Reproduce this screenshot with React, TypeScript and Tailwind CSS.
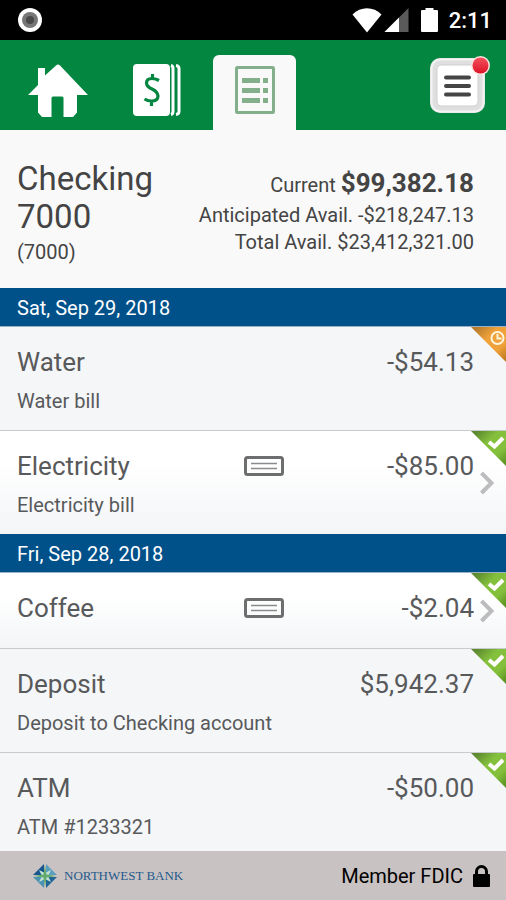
import React from 'react';
import clsx from 'clsx';

interface Transaction {
  id: number;
  name: string;
  amount: string;
  description?: string;
  status: 'pending' | 'cleared';
  hasCheck?: boolean;
}

interface Day {
  label: string;
  transactions: Transaction[];
}

const days: Day[] = [
  {
    label: 'Sat, Sep 29, 2018',
    transactions: [
      { id: 1, name: 'Water', amount: '-$54.13', description: 'Water bill', status: 'pending' },
      {
        id: 2,
        name: 'Electricity',
        amount: '-$85.00',
        description: 'Electricity bill',
        status: 'cleared',
        hasCheck: true,
      },
    ],
  },
  {
    label: 'Fri, Sep 28, 2018',
    transactions: [
      { id: 3, name: 'Coffee', amount: '-$2.04', status: 'cleared', hasCheck: true },
      {
        id: 4,
        name: 'Deposit',
        amount: '$5,942.37',
        description: 'Deposit to Checking account',
        status: 'cleared',
      },
      { id: 5, name: 'ATM', amount: '-$50.00', description: 'ATM #1233321', status: 'cleared' },
    ],
  },
];

const StatusBar = () => (
  <div className="flex h-10 shrink-0 items-center justify-between bg-black pr-[14px] pl-[17px] text-white">
    <svg className="size-[26px]" viewBox="0 0 26 26">
      <circle cx="13" cy="13" r="12" fill="#fff" />
      <circle cx="13" cy="13" r="8" fill="#777" />
      <circle cx="13" cy="13" r="4" fill="#4a4a4a" />
    </svg>
    <div className="flex items-center">
      <svg className="h-[26px] w-[30px]" viewBox="0 0 30 26">
        <path d="M15 25.500L.5 7.500C8.500-.8 21.500-.8 29.500 7.500z" fill="#fff" />
      </svg>
      <svg className="ml-[2px] h-[26px] w-[25px]" viewBox="0 0 25 26">
        <path d="M24.500 1v24H.5z" fill="#5a5a5a" />
        <path d="M15 10.500V25H.5z" fill="#fff" />
      </svg>
      <svg className="ml-3 h-[26px] w-[17px]" viewBox="0 0 17 26">
        <path d="M4.500 1h8v2H16q1 0 1 1v20q0 1-1 1H1q-1 0-1-1V4q0-1 1-1h3.500z" fill="#fff" />
      </svg>
      <span className="ml-[11px] pt-[2px] text-[22px] leading-6 font-medium">2:11</span>
    </div>
  </div>
);

const NavBar = () => (
  <nav className="flex h-[90px] shrink-0 items-end bg-[#038640] pr-[16px] pl-[17px]">
    <button aria-label="Home" className="flex h-[75px] w-[82px] items-center justify-center pb-1">
      <svg className="h-[54px] w-[60px]" viewBox="0 0 60 54">
        <path
          d="M10 4h7v7.500L28 1.500q2-2 4 0L60 31H49v17.500l-4 4.500H35.500V34q0-1.500-1.500-1.500H25q-1.500 0-1.500 1.500v19H14l-4-4.500V31H0l10-10z"
          fill="#fff"
        />
      </svg>
    </button>
    <button aria-label="Accounts" className="ml-[17px] flex h-[75px] w-[82px] items-center justify-center pb-[6px]">
      <svg className="h-[52px] w-[48px]" viewBox="0 0 48 52">
        <rect width="37" height="52" rx="4" fill="#fff" />
        <path d="M38 1.500q2 .5 2 3v43q0 2.500-2 3M43 1.500q3 .5 3 3v43q0 2.500-3 3" fill="none" stroke="#fff" strokeWidth="3" />
        <path d="M26 16.500q-3.500-2-7-2-5.500 0-5.500 4.500 0 3.500 5.500 6t6 7q0 5-6.500 5-4 0-7-2M19.500 10v5M18.500 37v5" fill="none" stroke="#038640" strokeWidth="3.200" />
      </svg>
    </button>
    <button
      aria-label="Transactions"
      className="ml-[15px] flex h-[75px] w-[83px] items-center justify-center rounded-t-md bg-[#f9f9f9] pb-[6px]"
    >
      <svg className="h-[48px] w-[40px]" viewBox="0 0 40 48" fill="none">
        <rect x="1.500" y="1.500" width="37" height="45" rx="1" stroke="#83b08a" strokeWidth="3" />
        <g stroke="#83b08a" strokeWidth="5">
          <path d="M7 14.500h18M28 14.500h5M7 24.500h18M28 24.500h5M7 34.500h18M28 34.500h5" />
        </g>
      </svg>
    </button>
    <button aria-label="Menu" className="mb-4 ml-auto">
      <svg className="h-[58px] w-[60px]" viewBox="0 0 60 58">
        <defs>
          <linearGradient id="badge" x1="0" y1="0" x2="0" y2="1">
            <stop offset="0" stopColor="#f5505c" />
            <stop offset="1" stopColor="#dc1428" />
          </linearGradient>
        </defs>
        <rect x="0" y="2" width="55" height="55" rx="10" fill="#dfdfdf" />
        <rect x="1.500" y="3.500" width="52" height="52" rx="9" fill="none" stroke="#f3f3f3" strokeWidth="2" />
        <rect x="7" y="9" width="41" height="41" rx="4" fill="#fff" stroke="#cfcfcf" />
        <path d="M16 21.500h23M16 30h23M16 38.500h23" stroke="#454545" strokeWidth="4" strokeLinecap="round" />
        <circle cx="50.500" cy="9.500" r="9.500" fill="#fbe3df" />
        <circle cx="50.500" cy="9.500" r="8" fill="url(#badge)" />
      </svg>
    </button>
  </nav>
);

const AccountSummary = () => (
  <header className="flex h-[158px] shrink-0 items-start justify-between bg-[#f9f9f9] pr-8 pl-[17px] text-[#444]">
    <div className="pt-[30px]">
      <h1 className="w-[150px] text-[33px] leading-[38px]">Checking 7000</h1>
      <p className="text-[20px] leading-8">(7000)</p>
    </div>
    <div className="pt-[37px] text-right text-[20px] leading-[27px]">
      <p className="leading-[33px]">
        Current <span className="text-[26px] font-bold">$99,382.18</span>
      </p>
      <p>Anticipated Avail. -$218,247.13</p>
      <p>Total Avail. $23,412,321.00</p>
    </div>
  </header>
);

const StatusRibbon = ({ status }: { status: Transaction['status'] }) => (
  <svg className="absolute top-0 right-0 h-9 w-[35px]" viewBox="0 0 35 36" fill="none">
    <defs>
      <linearGradient id="cleared" x1="0" y1="0" x2="1" y2="1">
        <stop offset="0.100" stopColor="#5d8a30" />
        <stop offset="0.400" stopColor="#84c03c" />
        <stop offset="0.700" stopColor="#84c03c" />
        <stop offset="0.950" stopColor="#5d9424" />
      </linearGradient>
      <linearGradient id="pending" x1="0" y1="0" x2="1" y2="1">
        <stop offset="0.100" stopColor="#b87b2e" />
        <stop offset="0.400" stopColor="#f0a23a" />
        <stop offset="0.700" stopColor="#f0a23a" />
        <stop offset="0.950" stopColor="#c07c22" />
      </linearGradient>
    </defs>
    <path d="M0 0h35v35z" fill={status === 'cleared' ? 'url(#cleared)' : 'url(#pending)'} />
    {status === 'cleared' ? (
      <path d="M18 11l5.500 4.500L32 7" stroke="#fff" strokeWidth="4" />
    ) : (
      <g stroke="#fff4dc" strokeWidth="2">
        <circle cx="26.500" cy="11" r="6" />
        <path d="M26.500 7v4.500h4" />
      </g>
    )}
  </svg>
);

const CheckIcon = () => (
  <svg className="h-5 w-10" viewBox="0 0 40 20" fill="none">
    <rect x="1.500" y="1.500" width="37" height="17" rx="2" stroke="#6d6e70" strokeWidth="3" />
    <path d="M7 7.500h26M7 12.500h26" stroke="#8b8c8e" strokeWidth="1.500" />
  </svg>
);

const TransactionRow = ({ transaction }: { transaction: Transaction }) => {
  const { name, amount, description, status, hasCheck } = transaction;
  const Tag = hasCheck ? 'button' : 'div';

  return (
    <li className="border-t border-[#c8cbce] first:border-[#9ab0c4]">
      <Tag
        className={clsx(
          'relative block w-full pt-[15px] pr-8 pl-[17px] text-left text-[#58595b]',
          description ? 'pb-[10px]' : 'pb-5',
          hasCheck ? 'bg-linear-to-b from-white from-30% to-[#f3f5f7]' : 'bg-[#f4f6f8]'
        )}
      >
        <span className="grid grid-cols-[6fr_40px_5fr] items-center text-[26px] leading-10">
          <span>{name}</span>
          <span>{hasCheck && <CheckIcon />}</span>
          <span className="text-right">{amount}</span>
        </span>
        {description && <span className="block text-[20px] leading-[38px]">{description}</span>}
        <StatusRibbon status={status} />
        {hasCheck && (
          <svg className="absolute top-1/2 right-3 h-6 w-[14px] -translate-y-1/2" viewBox="0 0 14 24" fill="none">
            <path d="M1.500 2l10 10-10 10" stroke="#bcbcbe" strokeWidth="4" />
          </svg>
        )}
      </Tag>
    </li>
  );
};

const Footer = () => (
  <footer className="flex h-[49px] shrink-0 items-center justify-between bg-[#c9c2c2] pr-4 pl-8">
    <div className="flex items-center gap-[6px]">
      <svg className="size-[26px]" viewBox="0 0 26 26">
        <path d="M12 1v11H1z" fill="#17558f" />
        <path d="M14 1v11h11z" fill="#5a9fc0" />
        <path d="M12 25V14H1z" fill="#4b92b3" />
        <path d="M14 25V14h11z" fill="#1f6596" />
        <path d="M7 7l6 3 6-3-3 6 3 6-6-3-6 3 3-6z" fill="#c3e0d4" />
        <path d="M13 2l1.500 9.500L24 13l-9.500 1.500L13 24l-1.500-9.500L2 13l9.500-1.500z" fill="#62ab6c" />
      </svg>
      <span className="font-['Liberation_Serif',serif] text-[13px] leading-5 text-[#1f5a8c]">NORTHWEST BANK</span>
    </div>
    <div className="flex items-center gap-[10px] text-[20px] text-black">
      <span>Member FDIC</span>
      <svg className="h-[22px] w-[17px]" viewBox="0 0 17 22">
        <rect y="9" width="17" height="13" rx="1" fill="#000" />
        <path d="M3.500 10V6.500a5 5 0 0 1 10 0V10" fill="none" stroke="#000" strokeWidth="3" />
      </svg>
    </div>
  </footer>
);

const App = () => {
  return (
    <div className="flex h-screen flex-col bg-[#f4f6f8] font-[Roboto,sans-serif]">
      <StatusBar />
      <NavBar />
      <AccountSummary />

      {/* Transactions grouped by day */}
      <main className="min-h-0 flex-1 overflow-y-auto [scrollbar-width:none]">
        {days.map((day) => (
          <section key={day.label}>
            <h2 className="bg-[#00518a] pt-[2px] pl-[17px] text-[20px] leading-9 text-white">{day.label}</h2>
            <ul>
              {day.transactions.map((transaction) => (
                <TransactionRow key={transaction.id} transaction={transaction} />
              ))}
            </ul>
          </section>
        ))}
      </main>

      <Footer />
    </div>
  );
};

export default App;
